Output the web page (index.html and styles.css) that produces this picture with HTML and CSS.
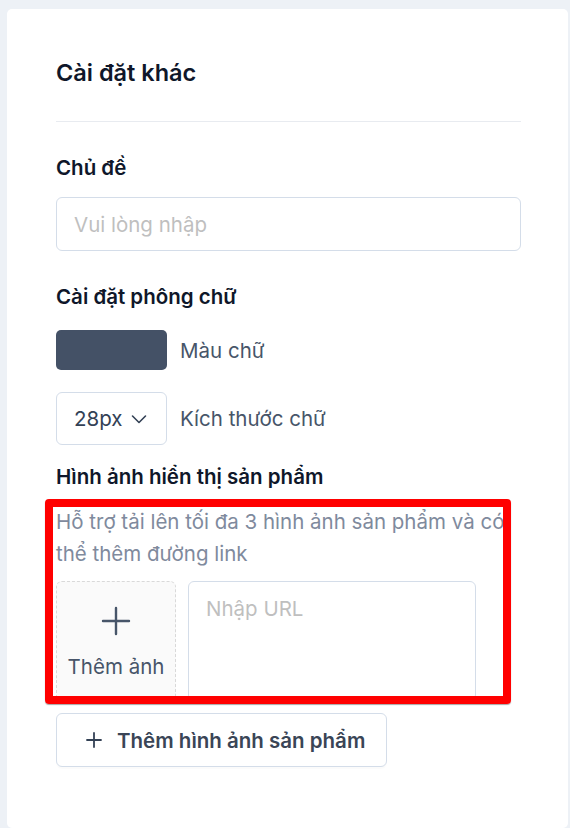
FILE: index.html
```html
<!DOCTYPE html>
<html lang="vi">
  <head>
    <meta charset="UTF-8" />
    <meta name="viewport" content="width=device-width, initial-scale=1.0" />
    <title>Cài đặt khác</title>
    <link rel="stylesheet" href="styles.css">
  </head>
  <body>
    <div class="card">
      <h2 class="card-title">Cài đặt khác</h2>
      <hr class="divider" />

      <label class="field-label" for="chude">Chủ đề</label>
      <input id="chude" class="text-input" type="text" placeholder="Vui lòng nhập" />

      <p class="field-label font-label">Cài đặt phông chữ</p>
      <div class="font-row color-row">
        <span class="swatch"></span>
        <span class="row-text">Màu chữ</span>
      </div>
      <div class="font-row size-row">
        <div class="size-select">
          <span>28px</span>
          <svg width="16" height="16" viewBox="0 0 16 16" fill="none">
            <path d="M1.5 5l6.5 6.5 6.5-6.5" stroke="#334155" stroke-width="1.6" stroke-linecap="round" stroke-linejoin="round" />
          </svg>
        </div>
        <span class="row-text">Kích thước chữ</span>
      </div>

      <p class="field-label images-label">Hình ảnh hiển thị sản phẩm</p>
      <div class="highlight">
        <p class="helper">Hỗ trợ tải lên tối đa 3 hình ảnh sản phẩm và có thể thêm đường link</p>
        <div class="upload-row">
          <div class="upload-box">
            <svg width="30" height="30" viewBox="0 0 30 30" fill="none">
              <path d="M15 2v26M2 15h26" stroke="#475569" stroke-width="2.4" stroke-linecap="round" />
            </svg>
            <span>Thêm ảnh</span>
          </div>
          <textarea class="url-input" placeholder="Nhập URL"></textarea>
        </div>
      </div>

      <button class="add-btn" type="button">
        <svg width="16" height="16" viewBox="0 0 16 16" fill="none">
          <path d="M8 1v14M1 8h14" stroke="#334155" stroke-width="1.8" stroke-linecap="round" />
        </svg>
        <span>Thêm hình ảnh sản phẩm</span>
      </button>
    </div>
  </body>
</html>
```

FILE: styles.css
```css
* {
  box-sizing: border-box;
}
body {
  margin: 0;
  padding: 9px 2px 0 7px;
  background: #edf1f6;
  font-family: Inter, "Noto Sans", sans-serif;
  color: #0f172a;
  overflow: hidden;
}

.card {
  background: #ffffff;
  border-radius: 5px;
  padding: 48px 47px 0 49px;
  height: 819px;
}
.card-title {
  margin: 0;
  font-size: 23.5px;
  line-height: 32px;
  font-weight: 600;
  color: #0f172a;
}
.divider {
  margin: 32px 0 0;
  border: none;
  border-top: 1px solid #e8ebf0;
}

.field-label {
  display: block;
  margin: 32px 0 15px;
  font-size: 20.5px;
  line-height: 28px;
  font-weight: 600;
  color: #0f172a;
}
.text-input {
  display: block;
  width: 100%;
  height: 54px;
  padding: 0 17px;
  border: 1px solid #d4dde9;
  border-radius: 6px;
  font-family: inherit;
  font-size: 20.5px;
  color: #334155;
  outline: none;
}
.text-input::placeholder,
.url-input::placeholder {
  color: #bfbfbf;
}

.font-label {
  margin-top: 32px;
  margin-bottom: 19px;
}
.font-row {
  display: flex;
  align-items: center;
  gap: 13px;
}
.size-row {
  margin-top: 22px;
}
.swatch {
  width: 111px;
  height: 40px;
  border-radius: 5px;
  background: #445166;
}
.row-text {
  font-size: 20.5px;
  color: #475569;
}
.size-select {
  display: flex;
  align-items: center;
  gap: 9px;
  width: 111px;
  height: 53px;
  padding-left: 17px;
  border: 1px solid #d4dde9;
  border-radius: 6px;
  font-size: 20.5px;
  color: #334155;
}

.images-label {
  margin-top: 18px;
  margin-bottom: 15px;
}

.highlight {
  position: relative;
}
.highlight::after {
  content: "";
  position: absolute;
  top: -7px;
  left: -11px;
  right: 10px;
  bottom: -3px;
  border: 8px solid #ff0000;
  border-radius: 4px;
  box-shadow: 0 1px 1px rgba(0, 0, 0, 0.35);
  pointer-events: none;
}
.helper {
  margin: 0 0 11px;
  width: 465px;
  font-size: 20.5px;
  line-height: 32px;
  color: #7f8a9d;
}
.upload-row {
  display: flex;
  gap: 12px;
}
.upload-box {
  width: 120px;
  height: 120px;
  display: flex;
  flex-direction: column;
  align-items: center;
  padding-top: 24px;
  gap: 18px;
  background: #fafafa;
  border: 1px dashed #d9d9d9;
  border-radius: 6px;
  font-size: 20.5px;
  color: #475569;
}
.url-input {
  width: 288px;
  height: 120px;
  padding: 14px 17px;
  border: 1px solid #d4dde9;
  border-radius: 6px;
  resize: none;
  font-family: inherit;
  font-size: 20.5px;
  color: #334155;
  outline: none;
}

.add-btn {
  display: flex;
  align-items: center;
  gap: 15px;
  margin-top: 12px;
  height: 54px;
  padding: 0 21px 0 29px;
  background: #ffffff;
  border: 1px solid #d4dde9;
  border-radius: 6px;
  box-shadow: 0 2px 0 rgba(0, 0, 0, 0.015);
  font-family: inherit;
  font-size: 20.5px;
  font-weight: 600;
  color: #3a4556;
  cursor: pointer;
}
```
